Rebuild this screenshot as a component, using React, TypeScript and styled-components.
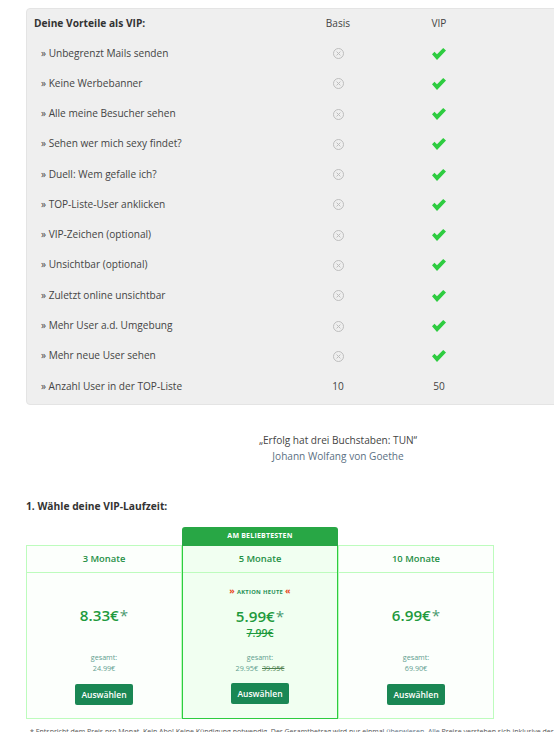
import React from 'react'
import styled, { createGlobalStyle } from 'styled-components'

const GlobalStyle = createGlobalStyle`
  html, body {
    margin: 0;
    padding: 0;
    background: #fff;
    overflow: hidden;
  }
  body {
    font-family: "Open Sans", "Noto Sans", sans-serif;
    color: #444;
  }
`

const Page = styled.div`
  width: 554px;
  height: 732px;
  overflow: hidden;
  padding: 8px 0 0 26px;
  box-sizing: border-box;
`

const Panel = styled.div`
  width: 560px;
  height: 397px;
  box-sizing: border-box;
  background: #efefef;
  border: 1px solid #e4e4e4;
  border-radius: 4px;
  padding: 0 0 0 7px;
`

const Row = styled.div`
  display: grid;
  grid-template-columns: 304px 101px 1fr;
  height: 30.27px;
  align-items: center;
  font-size: 10.1px;
`

const HeadRow = styled(Row)`
  height: 28.5px;
`

const HeadTitle = styled.div`
  font-weight: 700;
  font-size: 10.2px;
  color: #333;
`

const Label = styled.div`
  padding-left: 7px;
  color: #444;
`

const Cell = styled.div`
  width: 60px;
  margin-left: -30px;
  justify-self: start;
  display: flex;
  justify-content: center;
  color: #444;
`

const IconCell = styled(Cell)`
  padding-top: 2px;
`

const Quote = styled.div`
  margin: 27px 0 0 -26px;
  text-align: center;
  width: 554px;
  padding-left: 122px;
  box-sizing: border-box;
  font-size: 10.1px;
  line-height: 16px;
  color: #444;
`

const Author = styled.div`
  color: #5b7083;
`

const SectionTitle = styled.h2`
  margin: 34px 0 0;
  font-size: 10.25px;
  line-height: 16px;
  font-weight: 700;
  color: #333;
`

const Plans = styled.div`
  margin-top: 31px;
  display: grid;
  grid-template-columns: repeat(3, 156px);
  width: 468px;
`

const Plan = styled.div<{ $featured?: boolean }>`
  position: relative;
  z-index: ${p => (p.$featured ? 1 : 0)};
  box-sizing: border-box;
  height: 174px;
  display: flex;
  flex-direction: column;
  text-align: center;
  background: ${p => (p.$featured ? '#f1fff1' : '#fcfffc')};
  border: 1px solid ${p => (p.$featured ? '#2ecc40' : '#bdfcbd')};
`

const Ribbon = styled.div`
  position: absolute;
  left: -1px;
  right: -1px;
  top: -19px;
  height: 19px;
  background: #28a745;
  border-radius: 3px 3px 0 0;
  color: #fff;
  font-size: 7px;
  font-weight: 700;
  line-height: 18px;
  letter-spacing: 0.2px;
`

const PlanHead = styled.div`
  height: 27px;
  line-height: 26px;
  box-sizing: border-box;
  border-bottom: 1px solid #bdfcbd;
  font-size: 9.4px;
  font-weight: 600;
  color: #1f8f45;
`

const PlanBody = styled.div`
  flex: 1;
  display: flex;
  flex-direction: column;
  align-items: center;
`

const Deal = styled.div`
  margin-top: 15px;
  height: 9px;
  font-size: 5.8px;
  line-height: 9px;
  font-weight: 700;
  letter-spacing: 0.3px;
  color: #1f8f55;
`

const DealMark = styled.span`
  color: #e8431a;
  font-size: 9px;
  line-height: 0;
`

const Price = styled.div<{ $offset: number }>`
  margin-top: ${p => p.$offset}px;
  font-size: 15.2px;
  line-height: 21px;
  font-weight: 600;
  color: #1f9a3d;
`

const Star = styled.span`
  font-weight: 400;
  margin-left: 1px;
  color: #4a9a70;
`

const OldPrice = styled.div`
  font-size: 10.5px;
  line-height: 14px;
  margin-top: -1px;
  font-weight: 600;
  color: #1f9a3d;
  text-decoration: line-through;
`

const Totals = styled.div<{ $offset: number }>`
  margin-top: ${p => p.$offset}px;
  font-size: 7.2px;
  line-height: 11px;
  color: #5f9e8f;
`

const TotalLine = styled.div`
  display: flex;
  justify-content: center;
  gap: 4px;
`

const Struck = styled.span`
  text-decoration: line-through;
  color: #4f7f50;
`

const Select = styled.button<{ $offset: number }>`
  margin-top: ${p => p.$offset}px;
  width: 58px;
  height: 21px;
  padding: 0;
  border: none;
  border-radius: 2px;
  background: #1a8754;
  color: #fff;
  font-family: inherit;
  font-size: 8.5px;
  font-weight: 600;
`

const Footnote = styled.div`
  margin: 8px 0 0 4px;
  width: 560px;
  white-space: nowrap;
  font-size: 7px;
  line-height: 10px;
  color: #555;
`

const FootLink = styled.span`
  color: #5b7083;
`

const Cross = () => (
  <svg width="11" height="11" viewBox="0 0 11 11" fill="none" stroke="#bdbdbd">
    <circle cx="5.5" cy="5.5" r="5" />
    <path d="M3.6 3.6l3.8 3.8M7.4 3.6l-3.8 3.8" />
  </svg>
)

const Check = () => (
  <svg width="14" height="12" viewBox="0 0 14 12">
    <path fill="#2ecc40" d="M0 6.2 L2.5 3.8 L5 6.3 L11.2 0 L14 2.6 L5 12 Z" />
  </svg>
)

const features = [
  'Unbegrenzt Mails senden',
  'Keine Werbebanner',
  'Alle meine Besucher sehen',
  'Sehen wer mich sexy findet?',
  'Duell: Wem gefalle ich?',
  'TOP-Liste-User anklicken',
  'VIP-Zeichen (optional)',
  'Unsichtbar (optional)',
  'Zuletzt online unsichtbar',
  'Mehr User a.d. Umgebung',
  'Mehr neue User sehen',
]

const App: React.FC = () => {
  return (
    <>
      <GlobalStyle />
      <Page>
        <Panel>
          <HeadRow>
            <HeadTitle>Deine Vorteile als VIP:</HeadTitle>
            <Cell>Basis</Cell>
            <Cell>VIP</Cell>
          </HeadRow>
          {features.map(f => (
            <Row key={f}>
              <Label>» {f}</Label>
              <IconCell><Cross /></IconCell>
              <IconCell><Check /></IconCell>
            </Row>
          ))}
          <Row>
            <Label>» Anzahl User in der TOP-Liste</Label>
            <Cell>10</Cell>
            <Cell>50</Cell>
          </Row>
        </Panel>

        <Quote>
          „Erfolg hat drei Buchstaben: TUN“
          <Author>Johann Wolfang von Goethe</Author>
        </Quote>

        <SectionTitle>1. Wähle deine VIP-Laufzeit:</SectionTitle>

        <Plans>
          <Plan>
            <PlanHead>3 Monate</PlanHead>
            <PlanBody>
              <Price $offset={32}>8.33€<Star>*</Star></Price>
              <Totals $offset={26}>
                gesamt:
                <TotalLine>24.99€</TotalLine>
              </Totals>
              <Select $offset={10}>Auswählen</Select>
            </PlanBody>
          </Plan>
          <Plan $featured>
            <Ribbon>AM BELIEBTESTEN</Ribbon>
            <PlanHead>5 Monate</PlanHead>
            <PlanBody>
              <Deal><DealMark>»</DealMark> AKTION HEUTE <DealMark>«</DealMark></Deal>
              <Price $offset={9}>5.99€<Star>*</Star></Price>
              <OldPrice>7.99€</OldPrice>
              <Totals $offset={12}>
                gesamt:
                <TotalLine>29.95€ <Struck>39.95€</Struck></TotalLine>
              </Totals>
              <Select $offset={9}>Auswählen</Select>
            </PlanBody>
          </Plan>
          <Plan>
            <PlanHead>10 Monate</PlanHead>
            <PlanBody>
              <Price $offset={32}>6.99€<Star>*</Star></Price>
              <Totals $offset={26}>
                gesamt:
                <TotalLine>69.90€</TotalLine>
              </Totals>
              <Select $offset={10}>Auswählen</Select>
            </PlanBody>
          </Plan>
        </Plans>

        <Footnote>
          * Entspricht dem Preis pro Monat. Kein Abo! Keine Kündigung notwendig. Der Gesamtbetrag wird nur einmal <FootLink>überwiesen</FootLink>. <FootLink>Alle</FootLink> Preise verstehen sich inklusive der
        </Footnote>
      </Page>
    </>
  )
}

export default App
